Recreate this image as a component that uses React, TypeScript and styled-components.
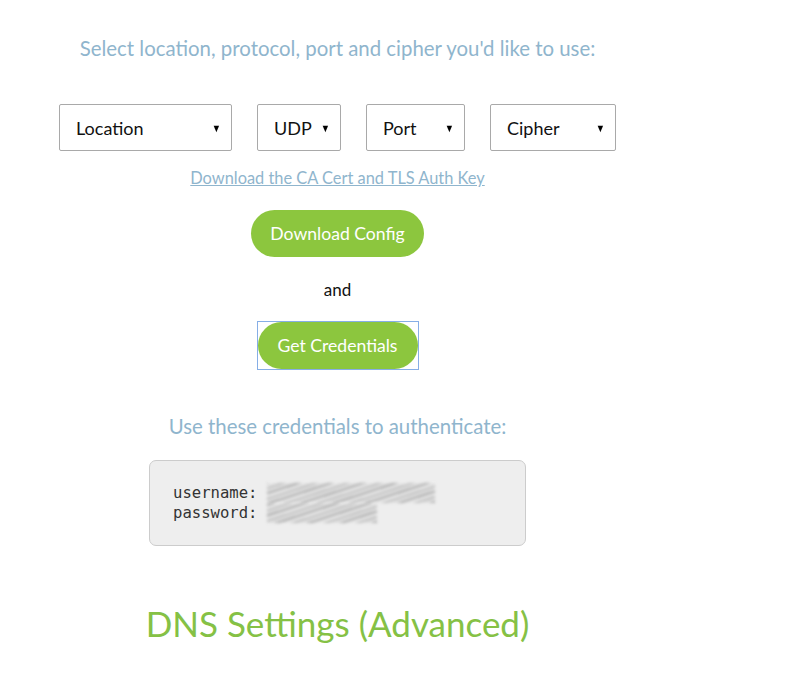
import styled, { createGlobalStyle } from "styled-components";

const GlobalStyle = createGlobalStyle`
  body {
    margin: 0;
    background: #fff;
    font-family: Lato, "Open Sans", sans-serif;
  }
`;

type Choice = { label: string; width: number };

const choices: Choice[] = [
  { label: "Location", width: 173 },
  { label: "UDP", width: 84 },
  { label: "Port", width: 99 },
  { label: "Cipher", width: 126 },
];

function App() {
  return (
    <>
      <GlobalStyle />
      <Page>
        <Prompt>Select location, protocol, port and cipher you'd like to use:</Prompt>
        <Selects>
          {choices.map((c) => (
            <SelectBox key={c.label} w={c.width}>
              <span>{c.label}</span>
              <Arrow>▼</Arrow>
            </SelectBox>
          ))}
        </Selects>
        <CertLink href="#">Download the CA Cert and TLS Auth Key</CertLink>
        <PillButton w={173} top={22}>
          Download Config
        </PillButton>
        <And>and</And>
        <FocusRing>
          <PillButton w={160} top={0}>
            Get Credentials
          </PillButton>
        </FocusRing>
        <Prompt2>Use these credentials to authenticate:</Prompt2>
        <Creds>
          <CredRow>
            <Key>username:</Key>
            <Smudge w={168} />
          </CredRow>
          <CredRow>
            <Key>password:</Key>
            <Smudge w={110} />
          </CredRow>
        </Creds>
        <Dns>DNS Settings (Advanced)</Dns>
      </Page>
    </>
  );
}

const Page = styled.div`
  width: 675px;
  padding-top: 36px;
  display: flex;
  flex-direction: column;
  align-items: center;
`;

const Prompt = styled.h3`
  margin: 0;
  font-size: 20.4px;
  line-height: 24px;
  font-weight: 400;
  color: #8fb5cd;
`;

const Selects = styled.div`
  display: flex;
  gap: 25px;
  margin-top: 44px;
`;

const SelectBox = styled.div<{ w: number }>`
  width: ${(p) => p.w}px;
  height: 47px;
  box-sizing: border-box;
  border: 1px solid #a9a9a9;
  border-radius: 2px;
  padding: 0 9px 0 16px;
  display: flex;
  align-items: center;
  justify-content: space-between;
  font-size: 18px;
  color: #111;
`;

const Arrow = styled.span`
  font-size: 11px;
  color: #000;
  transform: scaleX(0.85);
`;

const CertLink = styled.a`
  margin-top: 17px;
  font-size: 16.4px;
  line-height: 20px;
  color: #8fb5cd;
  text-decoration: underline;
`;

const PillButton = styled.button<{ w: number; top: number }>`
  width: ${(p) => p.w}px;
  height: 47px;
  margin-top: ${(p) => p.top}px;
  border: none;
  border-radius: 24px;
  background: #8cc63e;
  color: #fff;
  font-family: Lato, sans-serif;
  font-size: 17.6px;
  padding: 0;
`;

const And = styled.div`
  margin-top: 23px;
  font-size: 17px;
  line-height: 20px;
  color: #111;
`;

const FocusRing = styled.div`
  margin-top: 21px;
  border: 1px solid #86aee6;
  display: flex;
`;

const Prompt2 = styled(Prompt)`
  margin-top: 44px;
`;

const Creds = styled.div`
  margin-top: 22px;
  width: 377px;
  box-sizing: border-box;
  padding: 22px 23px;
  background: #eeeeee;
  border: 1px solid #cccccc;
  border-radius: 7px;
  font-family: "DejaVu Sans Mono", monospace;
  font-size: 15.6px;
  line-height: 20px;
  color: #333;
`;

const CredRow = styled.div`
  display: flex;
  align-items: center;
  gap: 9px;
`;

const Key = styled.span``;

const Smudge = styled.span<{ w: number }>`
  width: ${(p) => p.w}px;
  height: 20px;
  background: repeating-linear-gradient(
    -18deg,
    #a9a9a9 0 2px,
    #dcdcdc 2px 5px,
    #bdbdbd 5px 7px,
    #e6e6e6 7px 10px
  );
  filter: blur(1.6px);
  opacity: 0.9;
`;

const Dns = styled.h2`
  margin: 57px 0 0;
  font-size: 35px;
  line-height: 40px;
  font-weight: 400;
  color: #85c145;
`;

export default App;
